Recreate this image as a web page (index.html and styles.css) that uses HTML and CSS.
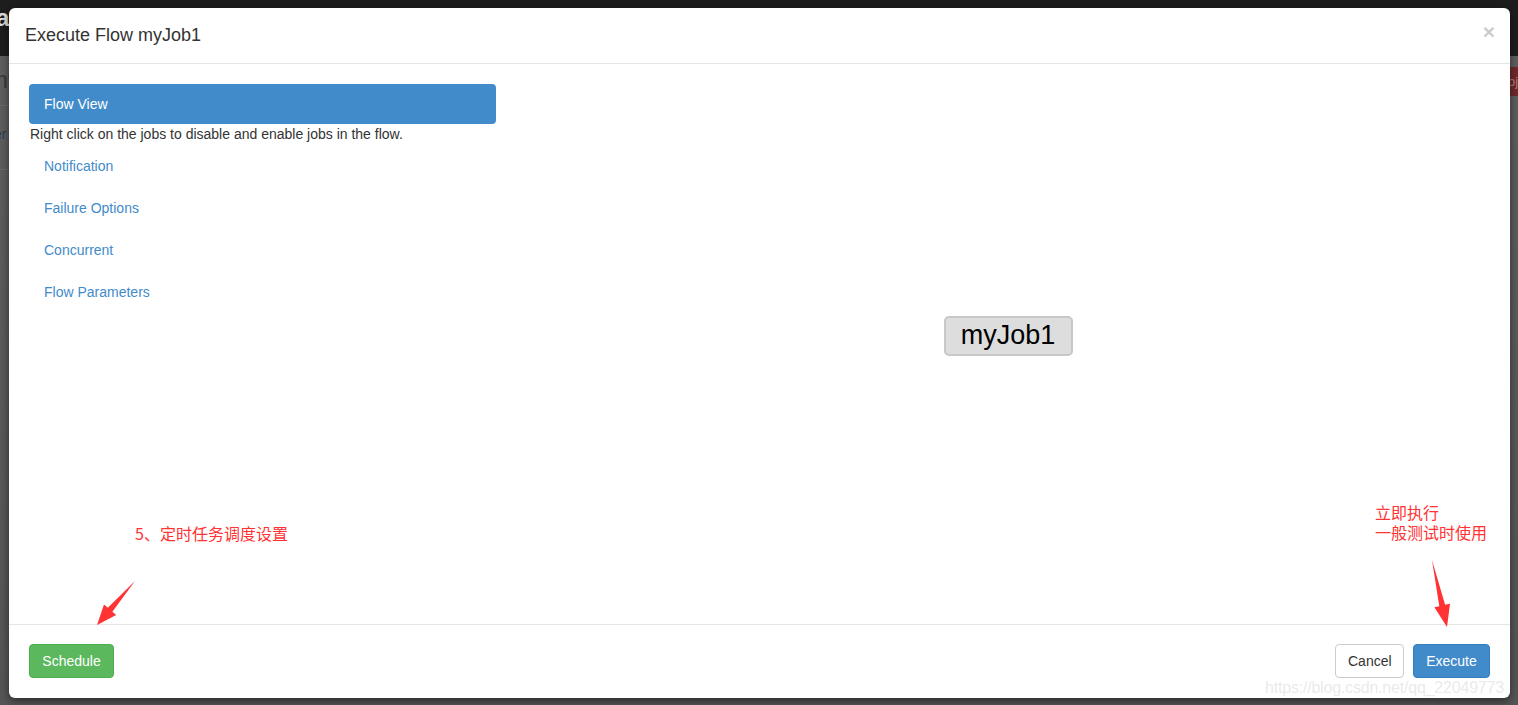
FILE: index.html
```html
<!DOCTYPE html>
<html>
<head>
<meta charset="utf-8">
<link rel="stylesheet" href="styles.css">
</head>
<body>
<div class="backdrop">
  <div class="bg-brand">a</div>
  <div class="bg-left">
    <div class="bg-title">my</div>
    <div class="bg-row">er</div>
  </div>
  <div class="bg-red">oj</div>
  <div class="modal">
    <div class="modal-header">
      <h4 class="modal-title">Execute Flow myJob1</h4>
      <span class="close">&times;</span>
    </div>
    <div class="modal-body">
      <div class="side">
        <div class="pill active">Flow View</div>
        <div class="hint">Right click on the jobs to disable and enable jobs in the flow.</div>
        <div class="pill">Notification</div>
        <div class="pill">Failure Options</div>
        <div class="pill">Concurrent</div>
        <div class="pill">Flow Parameters</div>
      </div>
      <div class="graph">
        <div class="node">myJob1</div>
      </div>
    </div>
    <div class="modal-footer">
      <button class="btn btn-success">Schedule</button>
      <div class="right-btns">
        <button class="btn btn-default">Cancel</button>
        <button class="btn btn-primary">Execute</button>
      </div>
    </div>
  </div>
</div>
<div class="note note-schedule">5、定时任务调度设置</div>
<div class="note note-exec">立即执行<br>一般测试时使用</div>
<svg class="arrows" width="1518" height="705" viewBox="0 0 1518 705">
  <polygon points="97,625 104,604.6 107.8,607.8 135,581 112.4,611.8 116.2,615" fill="#ff3333"/>
  <polygon points="1447,627 1434.4,607.2 1439.3,606.2 1432,560 1445.1,604.8 1450,603.8" fill="#ff3333"/>
</svg>
<div class="watermark">https://blog.csdn.net/qq_22049773</div>
</body>
</html>
```
FILE: styles.css
```css
* { box-sizing: border-box; }
html, body {
  margin: 0;
  padding: 0;
  width: 1518px;
  height: 705px;
  overflow: hidden;
}
body {
  font-family: "Liberation Sans", Arial, sans-serif;
  font-size: 14px;
  color: #333;
  position: relative;
}
.backdrop {
  position: relative;
  width: 1518px;
  height: 705px;
  background: linear-gradient(#1d1d1d 0, #1d1d1d 56px, #5e5e5e 56px, #555 705px);
  padding: 8px 8px 7px 9px;
}
.bg-brand {
  position: absolute;
  left: -4px;
  top: 4px;
  color: #ddd;
  font-size: 24px;
  font-weight: bold;
}
.bg-left {
  position: absolute;
  left: 0;
  top: 56px;
  width: 9px;
  overflow: hidden;
}
.bg-title {
  font-size: 24px;
  color: #3a3a3a;
  margin-left: -12px;
  padding-top: 10px;
  height: 50px;
  border-bottom: 1px solid #6a6a6a;
}
.bg-row {
  color: #2a3d55;
  font-size: 14px;
  margin-left: -6px;
  padding-top: 20px;
  height: 64px;
  border-bottom: 1px solid #6a6a6a;
}
.bg-red {
  position: absolute;
  right: 0;
  top: 67px;
  width: 8px;
  height: 29px;
  background: #6e2a2a;
  color: #b08080;
  font-size: 13px;
  line-height: 29px;
  overflow: hidden;
  text-indent: -2px;
}
.modal {
  position: relative;
  width: 1501px;
  height: 690px;
  background: #fff;
  border-radius: 6px;
  box-shadow: 0 3px 9px rgba(0,0,0,0.5);
  display: flex;
  flex-direction: column;
}
.modal-header {
  padding: 15px 15px 15px 16px;
  border-bottom: 1px solid #e5e5e5;
  display: flex;
  justify-content: space-between;
  align-items: flex-start;
}
.modal-title {
  margin: 0;
  font-size: 18px;
  font-weight: normal;
  line-height: 25px;
}
.close {
  font-size: 21px;
  font-weight: bold;
  line-height: 1;
  color: #000;
  opacity: 0.2;
  margin-right: 0;
  margin-top: -2px;
}
.modal-body {
  flex: 1;
  padding: 20px;
  display: flex;
}
.side {
  width: 467px;
  flex: none;
}
.pill {
  padding: 10px 15px;
  line-height: 20px;
  color: #428bca;
  border-radius: 4px;
  margin-top: 2px;
}
.pill.active {
  background: #428bca;
  color: #fff;
  margin-top: 0;
}
.hint {
  font-size: 14px;
  line-height: 20px;
  padding-left: 1px;
}
.graph {
  flex: 1;
  display: flex;
  align-items: center;
  justify-content: center;
  padding-left: 20px;
  padding-bottom: 16px;
  margin-right: -10px;
}
.node {
  width: 129px;
  height: 40px;
  background: #ddd;
  border: 2px solid #c8c8c8;
  border-radius: 5px;
  font-size: 27px;
  color: #000;
  display: flex;
  align-items: center;
  justify-content: center;
  padding-bottom: 1px;
}
.modal-footer {
  padding: 19px 20px 20px;
  border-top: 1px solid #e5e5e5;
  display: flex;
  justify-content: space-between;
}
.right-btns {
  display: flex;
  gap: 9px;
}
.btn {
  font-family: "Liberation Sans", Arial, sans-serif;
  font-size: 14px;
  line-height: 20px;
  padding: 6px 12px;
  height: 34px;
  border: 1px solid transparent;
  border-radius: 4px;
}
.btn-success {
  background: #5cb85c;
  border-color: #4cae4c;
  color: #fff;
  width: 85px;
}
.btn-default {
  background: #fff;
  border-color: #ccc;
  color: #333;
  width: 69px;
}
.btn-primary {
  background: #428bca;
  border-color: #357ebd;
  color: #fff;
  width: 77px;
}
.note {
  position: absolute;
  color: #ff3333;
  font-family: "Noto Sans CJK SC", sans-serif;
  font-size: 16px;
  line-height: 20px;
}
.note-schedule {
  left: 135px;
  top: 523px;
}
.note-exec {
  left: 1375px;
  top: 502px;
}
.arrows {
  position: absolute;
  left: 0;
  top: 0;
  pointer-events: none;
}
.watermark {
  position: absolute;
  left: 1265px;
  top: 679px;
  font-size: 16px;
  color: rgba(200,200,200,0.4);
  font-family: "Liberation Sans", Arial, sans-serif;
  letter-spacing: -0.2px;
}
```
